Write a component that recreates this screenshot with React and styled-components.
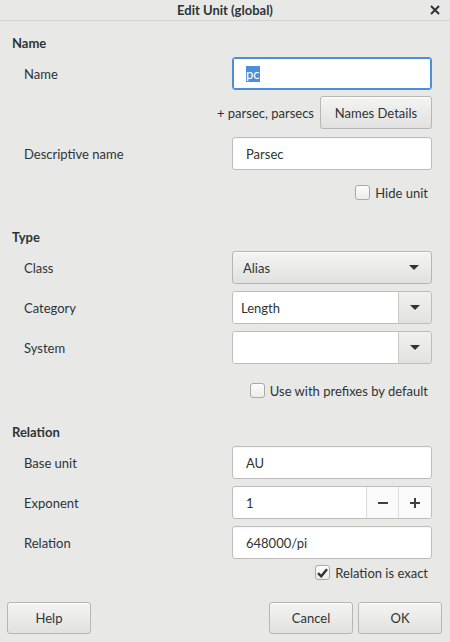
import React from "react";
import styled, { createGlobalStyle } from "styled-components";

const Global = createGlobalStyle`
  html, body { margin: 0; padding: 0; background: #e8e8e7; }
  body { font-family: "Lato", "Noto Sans", "DejaVu Sans", sans-serif; font-size: 13px; color: #2e3436; }
  * { box-sizing: border-box; }
`;

const Window = styled.div`
  width: 450px;
  height: 642px;
  background: #e8e8e7;
  display: flex;
  flex-direction: column;
  overflow: hidden;
`;

const TitleBar = styled.div`
  height: 21px;
  flex: none;
  border-bottom: 1px solid #d4d4d1;
  position: relative;
  display: flex;
  align-items: center;
  justify-content: center;
  font-weight: bold;
  font-size: 13px;
  color: #2e3436;
`;

const CloseX = styled.span`
  position: absolute;
  right: 8px;
  top: 3px;
  width: 14px;
  height: 14px;
  display: flex;
  align-items: center;
  justify-content: center;
`;

const Body = styled.div`
  flex: 1;
  display: flex;
  flex-direction: column;
  padding: 14px 18px 0 12px;
`;

const Heading = styled.div`
  font-weight: bold;
  height: 16px;
  line-height: 16px;
  margin-top: ${(p) => p.$top || 0}px;
  margin-bottom: 6px;
`;

const Row = styled.div`
  display: grid;
  grid-template-columns: 1fr 200px;
  align-items: center;
  height: 33px;
  margin-bottom: ${(p) => (p.$gap ?? 7)}px;
`;

const Label = styled.div`
  padding-left: 12px;
`;

const Entry = styled.div`
  height: 33px;
  background: #fff;
  border: 1px solid ${(p) => (p.$focus ? "#4a90d9" : "#bdbdb9")};
  box-shadow: ${(p) => (p.$focus ? "inset 0 0 0 1px #4a90d9" : "inset 0 1px 1px rgba(0,0,0,0.04)")};
  border-radius: 3px;
  display: flex;
  align-items: center;
  padding-left: 13px;
`;

const Selected = styled.span`
  background: #4a90d9;
  color: #fff;
`;

const ExtraRow = styled.div`
  display: flex;
  justify-content: flex-end;
  align-items: center;
  gap: 6px;
  height: 33px;
  margin-bottom: 8px;
`;

const Button = styled.div`
  height: ${(p) => p.$h || 33}px;
  width: ${(p) => (p.$w ? `${p.$w}px` : "auto")};
  padding: 0 ${(p) => (p.$w ? 0 : 16)}px;
  border: 1px solid #b6b6b3;
  border-radius: 3px;
  background: linear-gradient(to bottom, #f4f4f3, #e1e1df);
  box-shadow: inset 0 1px #fff;
  display: flex;
  align-items: center;
  justify-content: center;
`;

const Combo = styled.div`
  height: 33px;
  border: 1px solid #b6b6b3;
  border-radius: 3px;
  background: linear-gradient(to bottom, #f4f4f3, #e1e1df);
  box-shadow: inset 0 1px #fff;
  display: flex;
  align-items: center;
  justify-content: space-between;
  padding: 0 12px 0 10px;
`;

const Arrow = styled.span`
  width: 0;
  height: 0;
  border-left: 5px solid transparent;
  border-right: 5px solid transparent;
  border-top: 5px solid #2e3436;
`;

const ComboEntry = styled.div`
  height: 33px;
  border: 1px solid #bdbdb9;
  border-radius: 3px;
  display: grid;
  grid-template-columns: 1fr 33px;
  overflow: hidden;
`;

const ComboText = styled.div`
  background: #fff;
  display: flex;
  align-items: center;
  padding-left: 8px;
`;

const ComboBtn = styled.div`
  border-left: 1px solid #c8c8c5;
  background: linear-gradient(to bottom, #f1f1f0, #e1e1df);
  display: flex;
  align-items: center;
  justify-content: center;
`;

const Spin = styled.div`
  height: 33px;
  border: 1px solid #bdbdb9;
  border-radius: 3px;
  display: grid;
  grid-template-columns: 1fr 32px 33px;
  overflow: hidden;
  background: #fff;
`;

const SpinText = styled.div`
  display: flex;
  align-items: center;
  padding-left: 13px;
`;

const SpinBtn = styled.div`
  border-left: 1px solid #dcdcd9;
  background: #fafafa;
  display: flex;
  align-items: center;
  justify-content: center;
`;

const CheckRow = styled.div`
  display: flex;
  justify-content: flex-end;
  align-items: center;
  gap: 5px;
  height: 15px;
  margin-top: ${(p) => p.$top || 0}px;
  padding-right: 4px;
`;

const Box = styled.span`
  width: 15px;
  height: 15px;
  border: 1px solid #a9a9a6;
  border-radius: 3px;
  background: linear-gradient(to bottom, #fcfcfc, #ececea);
  display: flex;
  align-items: center;
  justify-content: center;
`;

const Footer = styled.div`
  display: flex;
  align-items: center;
  padding: 0 8px 8px 7px;
  margin-top: auto;
`;

const Spacer = styled.div`
  flex: 1;
`;

const FooterGap = styled.div`
  width: 5px;
`;

const Check = ({ checked, label, top }) => (
  <CheckRow $top={top}>
    <Box>
      {checked && (
        <svg width="11" height="10" viewBox="0 0 11 10">
          <path d="M1 5.2 L4.2 8.3 L10 1.2" fill="none" stroke="#2e3436" strokeWidth="2.4" />
        </svg>
      )}
    </Box>
    <span>{label}</span>
  </CheckRow>
);

export default function App() {
  return (
    <Window>
      <Global />
      <TitleBar>
        Edit Unit (global)
        <CloseX>
          <svg width="10" height="10" viewBox="0 0 10 10">
            <path d="M1 1 L9 9 M9 1 L1 9" stroke="#2e3436" strokeWidth="2" />
          </svg>
        </CloseX>
      </TitleBar>
      <Body>
        <Heading>Name</Heading>
        <Row $gap={6}>
          <Label>Name</Label>
          <Entry $focus>
            <Selected>pc</Selected>
          </Entry>
        </Row>
        <ExtraRow>
          <span>+ parsec, parsecs</span>
          <Button $w={112}>Names Details</Button>
        </ExtraRow>
        <Row $gap={0}>
          <Label>Descriptive name</Label>
          <Entry>Parsec</Entry>
        </Row>
        <Check label="Hide unit" top={15} />

        <Heading $top={29}>Type</Heading>
        <Row>
          <Label>Class</Label>
          <Combo>
            <span>Alias</span>
            <Arrow />
          </Combo>
        </Row>
        <Row>
          <Label>Category</Label>
          <ComboEntry>
            <ComboText>Length</ComboText>
            <ComboBtn>
              <Arrow />
            </ComboBtn>
          </ComboEntry>
        </Row>
        <Row $gap={0}>
          <Label>System</Label>
          <ComboEntry>
            <ComboText />
            <ComboBtn>
              <Arrow />
            </ComboBtn>
          </ComboEntry>
        </Row>
        <Check label="Use with prefixes by default" top={19} />

        <Heading $top={26}>Relation</Heading>
        <Row>
          <Label>Base unit</Label>
          <Entry>AU</Entry>
        </Row>
        <Row>
          <Label>Exponent</Label>
          <Spin>
            <SpinText>1</SpinText>
            <SpinBtn>
              <svg width="12" height="12" viewBox="0 0 12 12">
                <path d="M1 6 H11" stroke="#3c4043" strokeWidth="2" />
              </svg>
            </SpinBtn>
            <SpinBtn>
              <svg width="12" height="12" viewBox="0 0 12 12">
                <path d="M1 6 H11 M6 1 V11" stroke="#3c4043" strokeWidth="2" />
              </svg>
            </SpinBtn>
          </Spin>
        </Row>
        <Row $gap={0}>
          <Label>Relation</Label>
          <Entry>648000/pi</Entry>
        </Row>
        <Check checked label="Relation is exact" top={6} />
      </Body>
      <Footer>
        <Button $w={84} $h={32}>Help</Button>
        <Spacer />
        <Button $w={84} $h={32}>Cancel</Button>
        <FooterGap />
        <Button $w={84} $h={32}>OK</Button>
      </Footer>
    </Window>
  );
}
